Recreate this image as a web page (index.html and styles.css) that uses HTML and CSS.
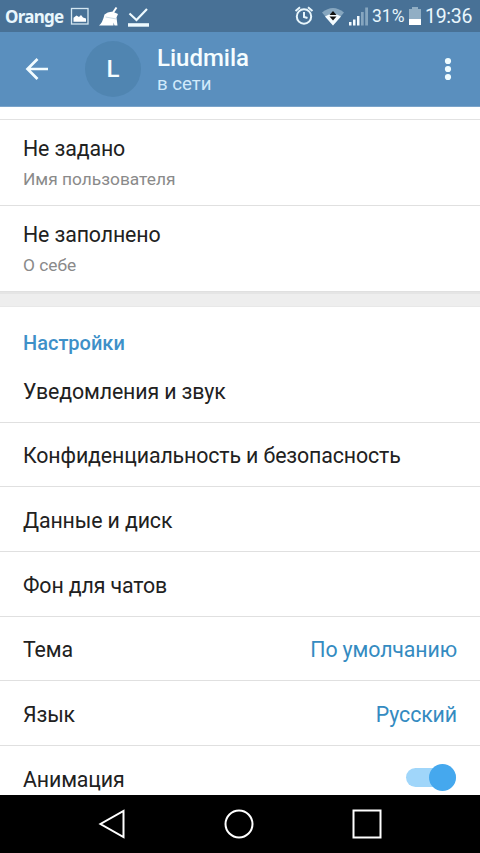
FILE: index.html
```html
<!DOCTYPE html>
<html lang="ru">
<head>
<meta charset="utf-8">
<title>Настройки</title>
<link rel="stylesheet" href="styles.css">
</head>
<body>
<div class="screen">
  <div class="status">
    <span class="carrier">Orange</span>
    <svg class="notices" width="80" height="24" viewBox="0 0 80 24">
      <rect x="1.500" y="4.500" width="16.500" height="15.500" fill="none" stroke="#d3e6f1" stroke-width="1.300"/>
      <path d="M3.500 17.800v-4l3-2.300 2.500 1.500 2-2 2 2.500 3 1v3.300z" fill="#fff"/>
      <path d="M46.500 3.500L42 10" fill="none" stroke="#fff" stroke-width="2"/>
      <path d="M34.500 10.500q4-3.500 9-2.500l4.500 2-1.500 3.500 1 8h-3l-1-3v3H29q3.500-2.500 5.500-11z" fill="#fff"/>
      <path d="M35.500 13l11 2" fill="none" stroke="#b4cbda" stroke-width=".7"/>
      <path d="M59.500 9.500l7 6.500L77 5" fill="none" stroke="#eefaff" stroke-width="2.200"/>
      <path d="M58 19.200h21v3.500H58z" fill="#eefaff"/>
    </svg>
    <svg class="signals" width="76" height="24" viewBox="0 0 76 24">
      <g fill="none" stroke="#e8f6fc" stroke-width="2">
        <circle cx="10" cy="12.500" r="7.200"/>
        <path d="M10 8v5l3.500 1M1.500 7l4.500-3.700M18.500 7L14 3.300"/>
      </g>
      <path d="M28 8.500q11-9 22 0L39 21.500z" fill="#86a6bf"/>
      <path d="M31 12.500q8-5.500 16 0L39 21.500z" fill="#f4fbff"/>
      <path d="M35.500 11L39 7l3.500 4zm0 1.500h7L39 16.500z" fill="#111"/>
      <path d="M55 18h2.500v3.500H55zM59 15.500h2.500v6H59zM63 12h2.500v9.500H63z" fill="#f4fbff"/>
      <path d="M67 8h2.700v13.500H67zM71.200 3.500h2.800v18h-2.800z" fill="#86a6bf"/>
    </svg>
    <span class="percent">31%</span>
    <svg class="battery" width="12" height="20" viewBox="0 0 12 20">
      <path d="M3 1h6v2h3v10H0V3h3z" fill="#91aec4"/>
      <path d="M0 13h12v6H0z" fill="#fff"/>
    </svg>
    <span class="clock">19:36</span>
  </div>
  <header class="header">
    <svg class="back" width="24" height="24" viewBox="0 0 24 24"><path d="M23 12H3M12.500 2L2.500 12l10 10" fill="none" stroke="#f2fcff" stroke-width="2.700"/></svg>
    <div class="avatar">L</div>
    <div class="person">
      <div class="name">Liudmila</div>
      <div class="presence">в сети</div>
    </div>
    <svg class="more" width="8" height="24" viewBox="0 0 8 24"><g fill="#effcff"><circle cx="4" cy="4" r="3.100"/><circle cx="4" cy="12" r="3.100"/><circle cx="4" cy="20" r="3.100"/></g></svg>
  </header>
  <main class="content">
    <div class="spacer"></div>
    <div class="info"><div class="label">Не задано</div><div class="hint">Имя пользователя</div></div>
    <div class="info"><div class="label">Не заполнено</div><div class="hint">О себе</div></div>
    <div class="divider"></div>
    <h2 class="section">Настройки</h2>
    <div class="row"><span>Уведомления и звук</span></div>
    <div class="row"><span>Конфиденциальность и безопасность</span></div>
    <div class="row"><span>Данные и диск</span></div>
    <div class="row"><span>Фон для чатов</span></div>
    <div class="row"><span>Тема</span><span class="value">По умолчанию</span></div>
    <div class="row"><span>Язык</span><span class="value">Русский</span></div>
    <div class="row"><span>Анимация</span><span class="switch"><span class="thumb"></span></span></div>
  </main>
  <nav class="nav">
    <svg width="28" height="32" viewBox="0 0 28 32"><path d="M25.500 3v26L2.500 16z" fill="none" stroke="#fff" stroke-width="2"/></svg>
    <svg width="32" height="32" viewBox="0 0 32 32"><circle cx="16" cy="16" r="13.500" fill="none" stroke="#fff" stroke-width="2"/></svg>
    <svg width="32" height="32" viewBox="0 0 32 32"><path d="M2.500 2.500h27v27h-27z" fill="none" stroke="#fff" stroke-width="2"/></svg>
  </nav>
</div>
</body>
</html>
```
FILE: styles.css
```css
* { box-sizing: border-box; }
body { margin: 0; font-family: Roboto, sans-serif; color: #212121; background: #fff; }
svg { display: block; flex: none; }
.screen { width: 480px; height: 853px; display: flex; flex-direction: column; overflow: hidden; }

.status { flex: none; height: 32px; padding: 0 8px 0 5px; display: flex; align-items: center; background: #487196; color: #e9f7fd; white-space: nowrap; }
.carrier { width: 65px; font-family: "Noto Sans", sans-serif; font-size: 17px; font-weight: 700; letter-spacing: -0.75px; }
.signals { margin-left: auto; }
.percent { width: 35px; margin-left: 2px; font-size: 17.500px; }
.battery { margin: 0 4px 0 2px; }
.clock { width: 47px; font-size: 19.500px; letter-spacing: -0.3px; }

.header { flex: none; height: 75px; padding: 0 28px 0 25px; display: flex; align-items: center; background: #5a8fbe; border-bottom: 1px solid #7ba4ca; }
.avatar { width: 56px; height: 56px; margin-left: 36px; border-radius: 50%; background: #5085b1; color: #f5fdff; display: flex; align-items: center; justify-content: center; font-size: 24px; font-weight: 500; }
.person { margin-left: 16px; padding-top: 3px; }
.name { color: #f5fdff; font-size: 24px; line-height: 28px; font-weight: 500; }
.presence { color: #d1eafb; font-size: 18.670px; line-height: 25px; }
.more { margin-left: auto; }

.content { flex: 1; min-height: 0; overflow: hidden; background: #fff; }
.spacer { height: 13px; border-bottom: 1px solid #e2e2e2; }
.info { height: 86px; padding: 15px 23px 0; border-bottom: 1px solid #e0e0e0; }
.label { font-size: 21.330px; line-height: 28px; letter-spacing: -0.12px; }
.hint { margin-top: 4px; color: #8a8a8a; font-size: 17.330px; line-height: 24px; }
.divider { height: 15px; background: #eee; border-top: 2px solid #e5e5e5; border-bottom: 1px solid #e8e8e8; }
.section { height: 51px; margin: 0; padding: 22px 23px 0; color: #3e90c8; font-size: 20px; line-height: 28px; font-weight: 500; }
.row { height: 64.670px; padding: 3px 23px 0; display: flex; align-items: center; justify-content: space-between; border-bottom: 1px solid #e0e0e0; font-size: 21.330px; letter-spacing: -0.12px; white-space: nowrap; }
.value { color: #348bc1; }
.switch { width: 50px; height: 19px; margin: 0 1px 3px 0; border-radius: 10px; background: #a0d6fa; display: flex; align-items: center; justify-content: flex-end; }
.thumb { width: 27px; height: 27px; flex: none; border-radius: 50%; background: #45a8ee; }

.nav { flex: none; height: 58px; padding: 0 97px 0 98px; display: flex; align-items: center; justify-content: space-between; background: #000; }
```
